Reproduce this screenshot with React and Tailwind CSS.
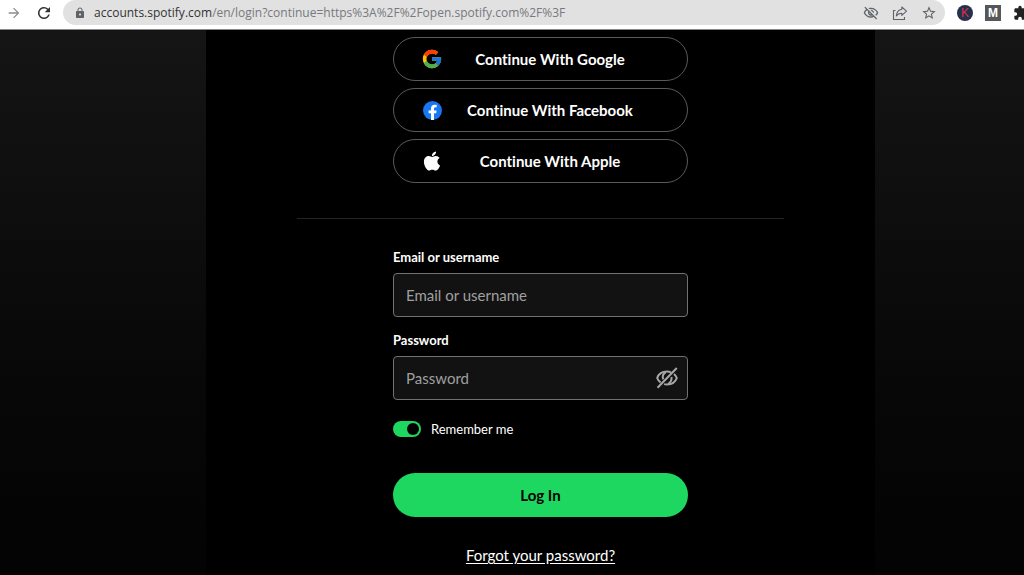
import React, { useState } from 'react';
import { FcGoogle } from 'react-icons/fc';
import { FaApple } from 'react-icons/fa';
import {
  MdArrowForward,
  MdExtension,
  MdLock,
  MdOutlineVisibilityOff,
  MdRefresh,
  MdStarBorder,
} from 'react-icons/md';

function FacebookIcon() {
  return (
    <svg viewBox="0 0 24 24" className="size-[19px]" aria-hidden="true">
      <circle cx="12" cy="12" r="12" fill="#1877f2" />
      <path
        fill="#fff"
        d="M16.67 15.47 17.2 12h-3.33V9.75c0-.95.47-1.87 1.96-1.87h1.51V4.92s-1.37-.23-2.69-.23c-2.74 0-4.53 1.66-4.53 4.67V12H7.08v3.47h3.04v8.38a12.1 12.1 0 0 0 3.75 0v-8.38z"
      />
    </svg>
  );
}

function ShareIcon() {
  return (
    <svg viewBox="0 0 16 16" className="size-4" fill="none" stroke="currentColor" strokeWidth="1.1" strokeLinejoin="round" aria-hidden="true">
      <path d="M3.500 5.500H1.500v9h11v-2.500" />
      <path d="M9.800 2l4.700 4.200-4.700 4.200V8.200C7.500 8.200 5.500 9 4.300 11c.3-3.500 2-6.200 5.500-6.700z" />
    </svg>
  );
}

function HiddenIcon() {
  return (
    <svg viewBox="0 0 24 24" className="size-6" fill="none" stroke="currentColor" strokeWidth="2" aria-hidden="true">
      <path d="M16 6.300C14.800 5.800 13.400 5.500 12 5.500c-4.700 0-8.500 2.700-9.800 6.500.6 1.800 1.800 3.300 3.400 4.400" />
      <path d="M19 8c1.300 1.100 2.300 2.400 2.800 4-1.300 3.800-5.100 6.500-9.800 6.500-1 0-2-.1-2.900-.4" />
      <path d="M10.800 6.200c-2.600 1.600-3.600 4.400-2.600 7.200" />
      <path d="M16.500 11c.4 2.700-.7 5.200-3.300 6.800" />
      <path d="M21.800 2 2.500 21.800" />
    </svg>
  );
}

const providers = [
  { name: 'Google', icon: <FcGoogle size={22} /> },
  { name: 'Facebook', icon: <FacebookIcon /> },
  { name: 'Apple', icon: <FaApple size={22} /> },
];

function BrowserBar() {
  return (
    <header className="flex h-[30px] items-start overflow-hidden border-b border-[#8a8a8a] bg-white pl-1.5 text-[#5f6368]">
      <button type="button" aria-label="Forward" className="flex h-[25px] w-[29px] shrink-0 items-center text-[#8b8d90]">
        <MdArrowForward size={16} />
      </button>
      <button type="button" aria-label="Reload" className="flex h-[25px] w-7 shrink-0 items-center text-[#333]">
        <MdRefresh size={18} />
      </button>
      <div className="flex h-[25px] min-w-0 flex-1 items-center rounded-full bg-[#e1e1e2] pr-2 pl-[11px]">
        <MdLock size={12} className="shrink-0" />
        <span className="ml-2 flex-1 truncate font-['Open_Sans','Noto_Sans',sans-serif] text-xs text-[#77797c]">
          <span className="text-[#333]">accounts.spotify.com</span>
          /en/login?continue=https%3A%2F%2Fopen.spotify.com%2F%3F
        </span>
        <div className="flex shrink-0 items-center gap-[13px]">
          <button type="button" aria-label="Third-party cookies blocked"><MdOutlineVisibilityOff size={16} /></button>
          <button type="button" aria-label="Share this page"><ShareIcon /></button>
          <button type="button" aria-label="Bookmark this tab"><MdStarBorder size={16} /></button>
        </div>
      </div>
      <div className="ml-3 flex h-[25px] shrink-0 items-center gap-3 font-['Liberation_Sans',sans-serif] text-xs leading-none">
        <button type="button" className="flex size-4 items-center justify-center rounded-full bg-[#26304a] text-[#d8344f]">K</button>
        <button type="button" className="flex size-4 items-center justify-center bg-[#55585a] font-bold text-white">M</button>
        <button type="button" aria-label="Extensions" className="w-[11px] overflow-hidden text-[#222]">
          <MdExtension size={16} />
        </button>
      </div>
    </header>
  );
}

function App() {
  const [remember, setRemember] = useState(true);
  const [visible, setVisible] = useState(false);

  return (
    <div className="flex min-h-screen flex-col font-['Lato',sans-serif] text-white [font-variant-ligatures:none]">
      <BrowserBar />
      <div className="grid flex-1 grid-cols-[206fr_669fr_149fr] bg-linear-to-b from-[#151515] to-[#030303]">
        <main className="col-start-2 flex flex-col items-center bg-black px-[91px] pt-[7px]">
          <div className="flex w-full max-w-[295px] flex-col gap-[7px]">
            {providers.map((provider) => (
              <button
                key={provider.name}
                type="button"
                className="flex h-11 items-center rounded-full border border-[#5a5a5a] pr-[30px] pl-[27px] text-[15px] font-bold"
              >
                <span className="flex w-[22px] justify-center">{provider.icon}</span>
                <span className="flex-1">Continue With {provider.name}</span>
              </button>
            ))}
          </div>

          <hr className="mt-[35px] w-full border-[#242424]" />

          <form className="mt-7 flex w-full max-w-[295px] flex-col" onSubmit={(e) => e.preventDefault()}>
            <label htmlFor="username" className="text-[13px] leading-5 font-bold">Email or username</label>
            <input
              id="username"
              type="text"
              placeholder="Email or username"
              className="mt-[6px] h-11 rounded border border-[#727272] bg-[#121212] px-3 text-[15px] placeholder:text-[#a0a0a0]"
            />

            <label htmlFor="password" className="mt-[13px] text-[13px] leading-5 font-bold">Password</label>
            <div className="mt-[6px] flex h-11 items-center rounded border border-[#727272] bg-[#121212] pr-2">
              <input
                id="password"
                type={visible ? 'text' : 'password'}
                placeholder="Password"
                className="h-full min-w-0 flex-1 bg-transparent px-3 text-[15px] outline-none placeholder:text-[#a0a0a0]"
              />
              <button type="button" aria-label="Show password" className="text-[#a7a7a7]" onClick={() => setVisible(!visible)}>
                <HiddenIcon />
              </button>
            </div>

            <label className="mt-[19px] flex items-center gap-2.5 text-[13px] leading-5">
              <input
                type="checkbox"
                checked={remember}
                onChange={(e) => setRemember(e.target.checked)}
                className="flex h-4 w-7 appearance-none items-center rounded-full bg-[#535353] p-0.5 before:size-3 before:rounded-full before:bg-black checked:justify-end checked:bg-[#1ed760]"
              />
              Remember me
            </label>

            <button type="submit" className="mt-[34px] h-11 rounded-full bg-[#1ed760] text-[15px] font-bold text-black">
              Log In
            </button>
          </form>

          <a href="#forgot" className="mt-7 text-[15px] leading-5 underline underline-offset-2">
            Forgot your password?
          </a>
        </main>
      </div>
    </div>
  );
}

export default App;
